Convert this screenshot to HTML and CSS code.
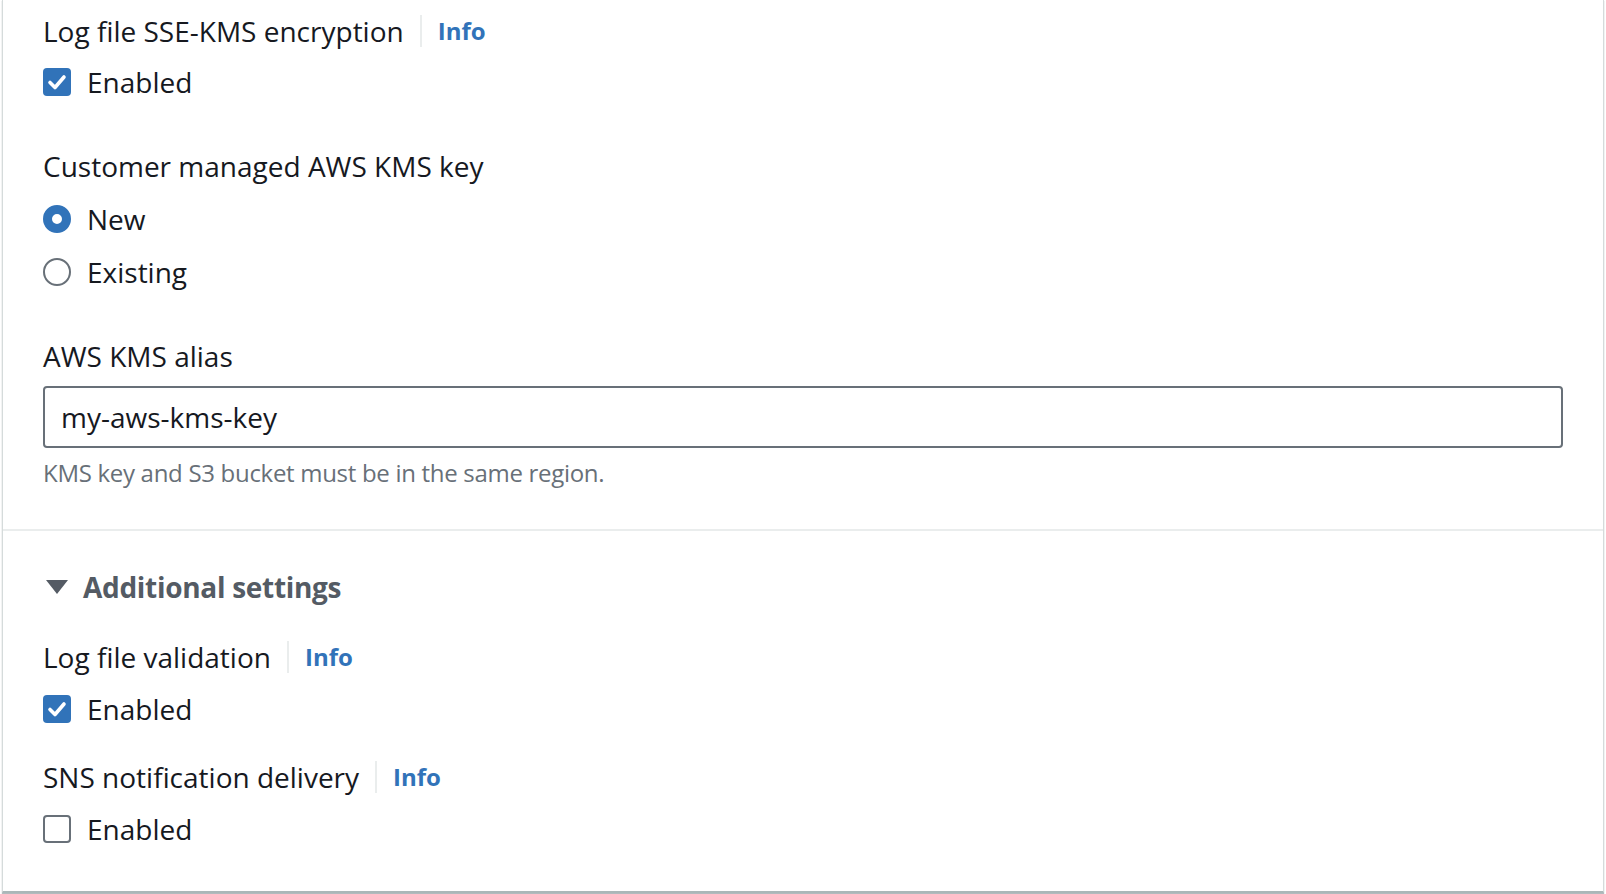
FILE: index.html
```html
<!DOCTYPE html>
<html lang="en">
<head>
<meta charset="utf-8">
<title>Trail settings</title>
<link rel="stylesheet" href="styles.css">
</head>
<body>
<div class="card">
  <section class="section">
    <div class="field first">
      <div class="label-row">
        <span class="label">Log file SSE-KMS encryption</span>
        <a class="info">Info</a>
      </div>
      <label class="option">
        <span class="checkbox checked"><svg viewBox="0 0 28 28" width="28" height="28"><path d="M7 14.5 L12 19.5 L21 9" fill="none" stroke="#fff" stroke-width="3.6" stroke-linecap="round" stroke-linejoin="round"/></svg></span>
        <span class="option-text">Enabled</span>
      </label>
    </div>

    <div class="field gap-lg wide">
      <div class="label-row"><span class="label">Customer managed AWS KMS key</span></div>
      <label class="option">
        <span class="radio checked"></span>
        <span class="option-text">New</span>
      </label>
      <label class="option">
        <span class="radio"></span>
        <span class="option-text">Existing</span>
      </label>
    </div>

    <div class="field gap-lg">
      <div class="label-row"><span class="label">AWS KMS alias</span></div>
      <div class="input">my-aws-kms-key</div>
      <div class="help">KMS key and S3 bucket must be in the same region.</div>
    </div>
  </section>

  <section class="section section-2">
    <div class="expander">
      <svg class="caret" viewBox="0 0 22 14" width="22" height="14"><path d="M0 0 H22 L11 14 Z" fill="#545b64"/></svg>
      <span class="expander-title">Additional settings</span>
    </div>

    <div class="field gap-md">
      <div class="label-row">
        <span class="label">Log file validation</span>
        <a class="info">Info</a>
      </div>
      <label class="option">
        <span class="checkbox checked"><svg viewBox="0 0 28 28" width="28" height="28"><path d="M7 14.5 L12 19.5 L21 9" fill="none" stroke="#fff" stroke-width="3.6" stroke-linecap="round" stroke-linejoin="round"/></svg></span>
        <span class="option-text">Enabled</span>
      </label>
    </div>

    <div class="field gap-sm">
      <div class="label-row">
        <span class="label">SNS notification delivery</span>
        <a class="info">Info</a>
      </div>
      <label class="option">
        <span class="checkbox"></span>
        <span class="option-text">Enabled</span>
      </label>
    </div>
  </section>
</div>
</body>
</html>
```

FILE: styles.css
```css
html, body {
  margin: 0;
  padding: 0;
  background: #ffffff;
}

body {
  font-family: "Open Sans", "Noto Sans", "Liberation Sans", sans-serif;
  color: #16191f;
  padding: 0 2px 1px 2px;
}

.card {
  background: #fff;
  border-left: 1px solid #d5dbdb;
  border-right: 1px solid #d5dbdb;
  border-bottom: 2px solid #aab7b8;
  box-shadow: 0 1px 1px rgba(0, 28, 36, 0.3);
}

.section {
  padding: 9px 40px 40px 40px;
}

.section-2 {
  border-top: 2px solid #eaeded;
  padding-top: 34px;
  padding-bottom: 40px;
}

.field {
  display: flex;
  flex-direction: column;
  gap: 8px;
}

.field.first {
  gap: 7px;
}

.field.wide {
  gap: 9px;
}

.gap-lg { margin-top: 40px; }
.gap-md { margin-top: 26px; }
.gap-sm { margin-top: 24px; }

.label-row {
  display: flex;
  align-items: center;
  height: 44px;
}

.label {
  font-size: 28px;
  line-height: 44px;
  color: #16191f;
}

.info {
  font-size: 24px;
  font-weight: 700;
  color: #3173b9;
  margin-left: 16px;
  padding-left: 16px;
  border-left: 2px solid #eaeded;
  line-height: 32px;
  cursor: pointer;
}

.option {
  display: flex;
  align-items: center;
  height: 44px;
}

.option-text {
  font-size: 28px;
  line-height: 44px;
  margin-left: 16px;
}

.checkbox {
  width: 28px;
  height: 28px;
  box-sizing: border-box;
  border: 2px solid #687078;
  border-radius: 4px;
  background: #fff;
  display: flex;
}

.checkbox.checked {
  border: none;
  background: #3173b9;
}

.radio {
  width: 28px;
  height: 28px;
  box-sizing: border-box;
  border-radius: 50%;
  border: 2px solid #687078;
  background: #fff;
}

.radio.checked {
  border: 9px solid #3173b9;
}

.input {
  box-sizing: border-box;
  height: 62px;
  border: 2px solid #687078;
  border-radius: 4px;
  padding: 0 16px;
  font-size: 28px;
  line-height: 58px;
  color: #16191f;
}

.help {
  font-size: 24px;
  line-height: 32px;
  color: #687078;
  letter-spacing: -0.3px;
  margin-top: 1px;
}

.expander {
  display: flex;
  align-items: center;
  height: 44px;
}

.caret {
  margin-left: 3px;
  margin-right: 15px;
}

.expander-title {
  font-size: 28px;
  font-weight: 700;
  color: #545b64;
  line-height: 44px;
  letter-spacing: -0.3px;
}
```
